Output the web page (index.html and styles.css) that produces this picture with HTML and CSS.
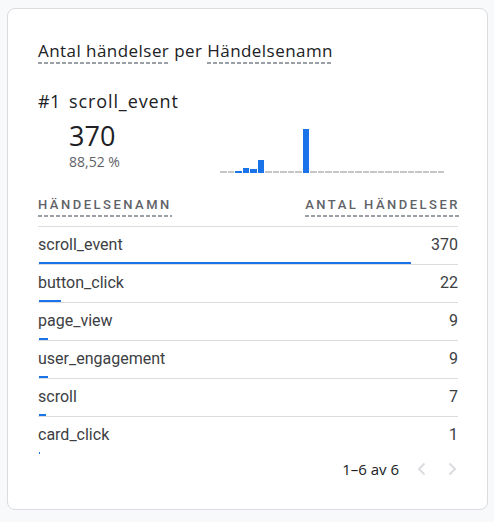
FILE: index.html
```html
<!DOCTYPE html>
<html lang="sv">
<head>
<meta charset="utf-8">
<title>Antal händelser per Händelsenamn</title>
<link rel="stylesheet" href="styles.css">
</head>
<body>
<div class="card">
  <div class="title"><span class="dash">Antal händelser</span> per <span class="dash">Händelsenamn</span></div>
  <div class="top"><span class="rank">#1</span><span class="top-name">scroll_event</span></div>
  <div class="summary">
    <div class="metric">
      <div class="value">370</div>
      <div class="pct">88,52 %</div>
    </div>
    <div class="spark">
      <i class="z"></i><i class="z"></i>
      <i class="b" style="height:2px"></i>
      <i class="b" style="height:5px"></i>
      <i class="b" style="height:4px"></i>
      <i class="b" style="height:13px"></i>
      <i class="z"></i><i class="z"></i><i class="z"></i><i class="z"></i><i class="z"></i>
      <i class="b" style="height:44px"></i>
      <i class="z"></i><i class="z"></i><i class="z"></i><i class="z"></i><i class="z"></i><i class="z"></i>
      <i class="z"></i><i class="z"></i><i class="z"></i><i class="z"></i><i class="z"></i><i class="z"></i>
      <i class="z"></i><i class="z"></i><i class="z"></i><i class="z"></i><i class="z"></i><i class="z"></i>
    </div>
  </div>
  <div class="thead">
    <span class="dash">Händelsenamn</span>
    <span class="dash">Antal händelser</span>
  </div>
  <div class="rows">
    <div class="row"><div class="cells"><span>scroll_event</span><span>370</span></div><div class="bar" style="width:372px"></div></div>
    <div class="row"><div class="cells"><span>button_click</span><span>22</span></div><div class="bar" style="width:22px"></div></div>
    <div class="row"><div class="cells"><span>page_view</span><span>9</span></div><div class="bar" style="width:9px"></div></div>
    <div class="row"><div class="cells"><span>user_engagement</span><span>9</span></div><div class="bar" style="width:9px"></div></div>
    <div class="row"><div class="cells"><span>scroll</span><span>7</span></div><div class="bar" style="width:7px"></div></div>
    <div class="row"><div class="cells"><span>card_click</span><span>1</span></div><div class="bar" style="width:1px"></div></div>
  </div>
  <div class="pager">
    <span class="range">1–6 av 6</span>
    <svg class="chev" width="12" height="14" viewBox="0 0 12 14"><polyline points="8.5,1.5 3,7 8.5,12.5"/></svg>
    <svg class="chev" width="12" height="14" viewBox="0 0 12 14"><polyline points="3.5,1.5 9,7 3.5,12.5"/></svg>
  </div>
</div>
</body>
</html>
```
FILE: styles.css
```css
* { box-sizing: border-box; }
html, body { margin: 0; padding: 0; }
body {
  background: #f8f9fa;
  font-family: Roboto, "Liberation Sans", sans-serif;
  color: #3c4043;
  padding: 8px 6px 12px 7px;
}
.card {
  width: 481px;
  height: 502px;
  background: #fff;
  border: 1px solid #dadce0;
  border-radius: 8px;
  padding: 30px 29px 0 30px;
}
.dash {
  background-image: repeating-linear-gradient(to right, #9aa0a6 0 4px, transparent 4px 6px);
  background-size: 100% 2px;
  background-position: left bottom;
  background-repeat: no-repeat;
}
.title {
  font-family: "Open Sans", Roboto, sans-serif;
  font-size: 17px;
  letter-spacing: 0.45px;
  line-height: 24px;
  color: #202124;
  height: 24px;
}
.title .dash { padding-bottom: 3px; display: inline-block; line-height: 21px; }
.top {
  margin-top: 26px;
  font-family: "Open Sans", Roboto, sans-serif;
  font-size: 18px;
  letter-spacing: 0.9px;
  line-height: 24px;
  color: #202124;
  display: flex;
}
.rank { width: 31px; letter-spacing: 0.4px; }
.summary {
  display: flex;
  align-items: flex-end;
  padding-left: 31px;
  height: 61px;
}
.metric { width: 151px; align-self: flex-start; }
.value {
  font-family: "Open Sans", Roboto, sans-serif;
  font-size: 27px;
  line-height: 32px;
  color: #202124;
  margin-top: 7px;
}
.pct {
  font-family: "Open Sans", Roboto, sans-serif;
  font-size: 14px;
  line-height: 20px;
  color: #5f6368;
}
.spark {
  width: 224px;
  height: 44px;
  display: grid;
  grid-template-columns: repeat(30, 1fr);
  column-gap: 1px;
  align-items: end;
  margin-bottom: 1px;
}
.spark i { display: block; }
.spark .b { background: #1a73e8; }
.spark .z { height: 2px; background: #c6c6c6; }
.thead {
  display: flex;
  justify-content: space-between;
  margin-top: 21px;
  font-size: 13px;
  font-weight: 500;
  letter-spacing: 2.5px;
  text-transform: uppercase;
  color: #5f6368;
  height: 31px;
}
.thead .dash { display: inline-block; line-height: 20px; padding-bottom: 2px; height: 22px; }
.thead .dash:last-child { margin-right: -2px; }
.row {
  border-top: 1px solid #dadce0;
  height: 38px;
  display: flex;
  flex-direction: column;
}
.cells {
  display: flex;
  justify-content: space-between;
  font-size: 16px;
  line-height: 20px;
  padding-top: 8px;
  height: 35px;
  color: #3c4043;
}
.bar { height: 2px; background: #1a73e8; margin-left: 1px; }
.pager {
  display: flex;
  align-items: center;
  justify-content: flex-end;
  margin-top: 1px;
  height: 28px;
}
.range {
  font-family: "Open Sans", Roboto, sans-serif;
  font-size: 15px;
  line-height: 20px;
  color: #202124;
  margin-right: 17px;
}
.chev { fill: none; stroke: #dadce0; stroke-width: 2; }
.chev + .chev { margin-left: 18px; }
```
